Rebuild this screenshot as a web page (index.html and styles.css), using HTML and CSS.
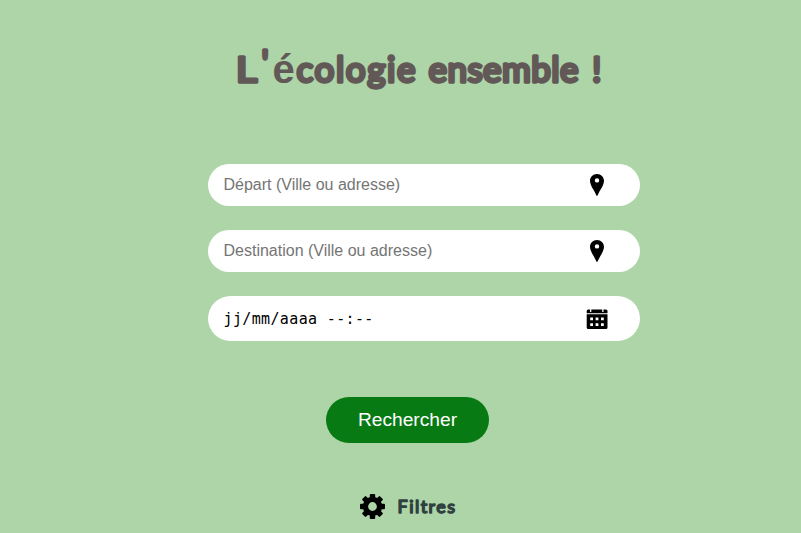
FILE: index.html
```html
<!DOCTYPE html>
<html lang="fr">
<head>
<meta charset="utf-8">
<title>L'écologie ensemble !</title>
<link rel="stylesheet" href="styles.css">
</head>
<body>
<main class="page">
  <h1 class="title">
    <svg width="370" height="76" viewBox="235 24 370 76">
      <text y="81.5"><tspan x="236" textLength="21" lengthAdjust="spacingAndGlyphs">L</tspan><tspan x="261.5" y="75">'</tspan><tspan class="accent" x="272.5" y="82.5">é</tspan><tspan x="296.5" y="81.5" textLength="119" lengthAdjust="spacing">cologie</tspan> <tspan x="428.5" textLength="150" lengthAdjust="spacing">ensemble</tspan> <tspan x="592">!</tspan></text>
    </svg>
  </h1>
  <form class="search">
    <div class="field">
      <span class="placeholder">Départ (Ville ou adresse)</span>
      <svg class="icon" width="24" height="24" viewBox="0 0 24 24"><path fill-rule="evenodd" d="M12 1C8 1 5 4 5 7.8C5 12.5 9.4 17.5 11.3 22.2Q12 23.8 12.7 22.2C14.6 17.5 19 12.5 19 7.8C19 4 16 1 12 1ZM12 5.2a2.2 2.2 0 1 1 0 4.4a2.2 2.2 0 0 1 0-4.4Z"/></svg>
    </div>
    <div class="field">
      <span class="placeholder">Destination (Ville ou adresse)</span>
      <svg class="icon" width="24" height="24" viewBox="0 0 24 24"><path fill-rule="evenodd" d="M12 1C8 1 5 4 5 7.8C5 12.5 9.4 17.5 11.3 22.2Q12 23.8 12.7 22.2C14.6 17.5 19 12.5 19 7.8C19 4 16 1 12 1ZM12 5.2a2.2 2.2 0 1 1 0 4.4a2.2 2.2 0 0 1 0-4.4Z"/></svg>
    </div>
    <div class="field field-date">
      <span class="date">jj/mm/aaaa --:--</span>
      <svg class="icon" width="24" height="24" viewBox="0 0 24 24"><path d="M1.7 6.2V4Q1.7 2.5 3.2 2.5H5V5H6.3V2.5H17.2V5H18.5V2.5H21Q22.5 2.5 22.5 4V6.2Z"/><path fill-rule="evenodd" d="M1.7 7.3H22.5V20.5Q22.5 22 21 22H3.2Q1.7 22 1.7 20.5ZM5.2 10.5v2.8h2.8v-2.8ZM10.6 10.5v2.8h2.8v-2.8ZM16 10.5v2.8h2.8v-2.8ZM5.2 16.2v2.8h2.8v-2.8ZM10.6 16.2v2.8h2.8v-2.8ZM16 16.2v2.8h2.8v-2.8Z"/></svg>
    </div>
    <button class="submit" type="button">Rechercher</button>
  </form>
  <div class="filters">
    <svg width="26" height="26" viewBox="-13.5 -13.5 26 26">
      <path fill-rule="evenodd" d="M0-9.7A9.7 9.7 0 1 0 0 9.7A9.7 9.7 0 1 0 0-9.7ZM0-4.4A4.4 4.4 0 1 1 0 4.4A4.4 4.4 0 1 1 0-4.4Z"/>
      <g id="teeth"><rect x="-2.7" y="-12.5" width="5.4" height="5" rx="1"/><rect x="-2.7" y="7.5" width="5.4" height="5" rx="1"/><rect x="-12.5" y="-2.7" width="5" height="5.4" rx="1"/><rect x="7.5" y="-2.7" width="5" height="5.4" rx="1"/></g>
      <use href="#teeth" transform="rotate(45)"/>
    </svg>
    <svg class="filters-label" width="64" height="26" viewBox="395 492 64 26"><text x="397.5" y="511.6" textLength="57.5" lengthAdjust="spacing">Filtres</text></svg>
  </div>
</main>
</body>
</html>
```
FILE: styles.css
```css
* { box-sizing: border-box; }
body { margin: 0; background: #add5a7; font-family: "Liberation Sans", Arial, sans-serif; }
svg { display: block; flex: none; }
.page { height: 533px; overflow: hidden; padding-top: 24px; }
.title { margin: 0 0 64px 235px; height: 76px; }
.title text {
  font: 400 35px Lato, sans-serif;
  fill: #625858;
  stroke: #625858;
  stroke-width: 3.4px;
  stroke-linejoin: round;
}
.title .accent { font: 700 40px "Liberation Sans", sans-serif; stroke-width: 0; }
.search { width: 432px; margin-left: 208px; }
.field {
  display: flex;
  align-items: center;
  justify-content: space-between;
  height: 42px;
  margin-bottom: 24px;
  padding: 0 31px 0 15.5px;
  border-radius: 24px;
  background: #fff;
  font-size: 16px;
}
.field-date { height: 45px; }
.placeholder { color: #757575; }
.date { padding-top: 1px; font: 15px "DejaVu Sans Mono", monospace; letter-spacing: .36px; color: #000; }
.submit {
  display: block;
  width: 163px;
  height: 46px;
  margin: 56px 0 0 118px;
  padding: 0;
  border: 0;
  border-radius: 23px;
  background: #087a14;
  color: #fff;
  font: 19.2px "Liberation Sans", Arial, sans-serif;
}
.filters { display: flex; align-items: center; margin: 50px 0 0 359px; }
.filters-label { margin-left: 10px; }
.filters-label text {
  font: 400 18px Lato, sans-serif;
  fill: #2f4040;
  stroke: #2f4040;
  stroke-width: 1.5px;
  stroke-linejoin: round;
}
```
